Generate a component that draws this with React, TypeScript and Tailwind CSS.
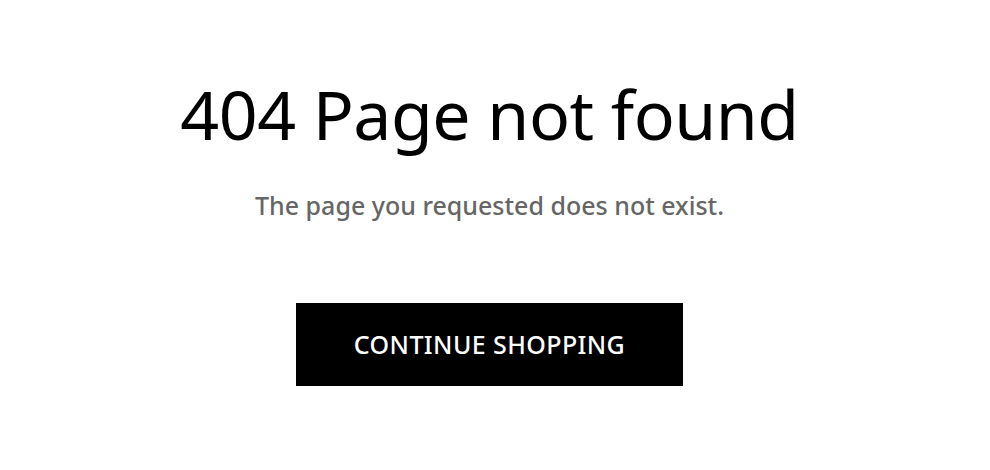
import React from "react";

function NotFound() {
  return (
    <div
      className="w-[979px] flex flex-col items-center pt-[67px]"
      style={{ fontFamily: "'Noto Sans', 'Open Sans', sans-serif" }}
    >
      <h1 className="text-[68px] leading-[94px] font-normal text-black tracking-[-0.5px]">
        404 Page not found
      </h1>
      <p className="mt-[27px] text-[25px] leading-[34px] font-medium text-[#666666]">
        The page you requested does not exist.
      </p>
      <button className="mt-[81px] w-[387px] h-[83px] bg-black text-white text-[25px] tracking-[0.4px] font-medium uppercase">
        Continue Shopping
      </button>
    </div>
  );
}

export default function App() {
  return (
    <div className="bg-white min-h-[470px]">
      <NotFound />
    </div>
  );
}
